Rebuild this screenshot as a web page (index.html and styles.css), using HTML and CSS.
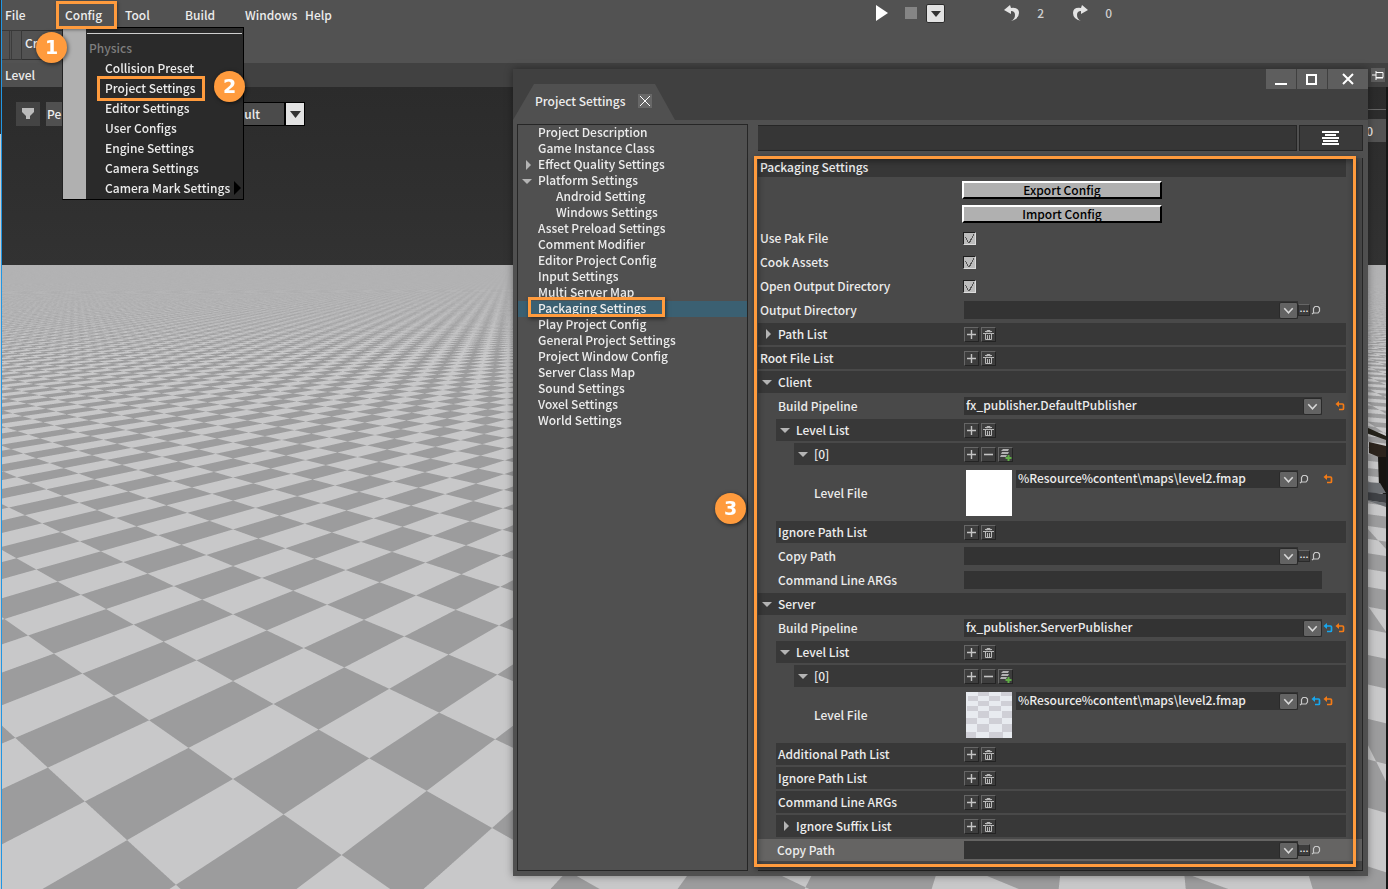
FILE: index.html
```html
<!DOCTYPE html>
<html lang="en">
<head>
    <meta charset="UTF-8">
    <meta name="viewport" content="width=device-width, initial-scale=1.0">
    <title>Project Settings</title>
    <link rel="stylesheet" href="styles.css">
</head>
<body>
    <svg class="sprites" aria-hidden="true">
        <symbol id="plus" viewBox="0 0 13 13"><path d="M6.5 2v9M2 6.5h9" stroke="#c4c4c4" stroke-width="1.4"/></symbol>
        <symbol id="minus" viewBox="0 0 13 13"><path d="M2 6.5h9" stroke="#c4c4c4" stroke-width="1.6"/></symbol>
        <symbol id="trash" viewBox="0 0 13 13"><path d="M1 5.5h11M5 4.5v-2h3v2M3 3.5h7M3.5 6v5.5h6V6M5.5 7v4M7.5 7v4" fill="none" stroke="#b8b8b8"/></symbol>
        <symbol id="stack" viewBox="0 0 13 13"><path d="M4 1h6L9 3H2zM3 4h7L9 6H2zM2 7h6l-1 2H1z" fill="#b0b0b0"/><path d="M9.5 7v6M6.5 10h6" stroke="#5fae45" stroke-width="2"/></symbol>
        <symbol id="chevron" viewBox="0 0 18 16"><path d="M4.5 5.5L9 10.5l4.5-5" fill="none" stroke="#d8d8d8" stroke-width="1.6"/></symbol>
        <symbol id="lens" viewBox="0 0 12 12"><path d="M4 8.5L2 10M3.5 9V4.5L5 2.5h3L9.5 4v3L8 9z" fill="none" stroke="#c8c8c8" stroke-width="1.2"/></symbol>
        <symbol id="revert" viewBox="0 0 12 12"><path d="M3 4h5.5Q9.5 4 9.5 5v3.5Q9.5 9.5 8.5 9.5H5" fill="none" stroke="currentColor" stroke-width="1.7"/><path d="M1.5 4L5 1v6z" fill="currentColor"/></symbol>
    </svg>

    <div class="editor">
        <nav class="menubar">
            <button class="menu">File</button>
            <div class="menu-open">
                <button class="menu">Config</button>
                <div class="dropdown">
                    <div class="dropdown-title">Physics</div>
                    <button class="item">Collision Preset</button>
                    <button class="item marked">Project Settings</button>
                    <button class="item">Editor Settings</button>
                    <button class="item">User Configs</button>
                    <button class="item">Engine Settings</button>
                    <button class="item">Camera Settings</button>
                    <button class="item more">Camera Mark Settings</button>
                </div>
                <span class="badge badge-1">1</span>
                <span class="badge badge-2">2</span>
            </div>
            <button class="menu">Tool</button>
            <button class="menu">Build</button>
            <button class="menu">Windows</button>
            <button class="menu">Help</button>
            <div class="playbar">
                <button aria-label="Play"><svg width="14" height="18"><path d="M1 1l12 8-12 8z" fill="#fff"/></svg></button>
                <button class="stop" aria-label="Stop"></button>
                <button class="play-options" aria-label="Play options"><svg width="17" height="17"><path d="M4 6h10l-5 6z" fill="#333"/></svg></button>
                <button class="undo" aria-label="Undo"><svg width="16" height="18"><path d="M6 1L0 6l7 4V7q4 0 4 4t-4 6q8-2 8-8t-8-5z" fill="#e4e4e4"/></svg></button>
                <span class="count">2</span>
                <button class="redo" aria-label="Redo"><svg width="16" height="18"><path d="M10 1l6 5-7 4V7Q5 7 5 11t4 6Q1 15 1 9t8-5z" fill="#e4e4e4"/></svg></button>
                <span class="count">0</span>
            </div>
        </nav>
        <div class="toolbar">
            <span class="grip"></span>
            <button class="tool">Cr</button>
        </div>
        <div class="tabs">
            <span class="level-tab">Level</span>
            <button class="pin" aria-label="Pin"><svg width="14" height="14"><path d="M1 7h4M5 3v9M5 4.5h7v5H5M5 10h7" fill="none" stroke="#fff"/></svg></button>
        </div>
        <div class="viewport">
            <canvas class="floor"></canvas>
            <div class="view-tools">
                <button class="view-menu" aria-label="View menu"><svg width="24" height="24"><path d="M6 6h12v4l-4 4v3h-4v-3l-4-4z" fill="#bbb"/></svg></button>
                <button class="view-mode">Pe</button>
                <button class="view-preset">ult</button>
                <button class="view-arrow" aria-label="Choose preset"><svg width="18" height="21"><path d="M4 7h11l-5.500 7z" fill="#333"/></svg></button>
            </div>
            <div class="view-side"><span>0</span></div>
            <svg class="robot" width="20" height="90"><path d="M0 8l20 9v4L0 14z" fill="#24221a"/><path d="M3 23l17 4v14L3 34z" fill="#2c241d"/><path d="M12 38h8v42l-7-12z" fill="#161411"/><path d="M0 63l14 1 6 10H0z" fill="#6c6f73"/><path d="M0 73l20 2v9L0 81z" fill="#3f4145"/><path d="M0 81l20 3v4z" fill="#6c6f73"/></svg>
        </div>
    </div>

    <main class="window">
        <header class="titlebar">
            <div class="window-tab">Project Settings
                <button class="close-tab" aria-label="Close tab"><svg width="14" height="14"><path d="M2 2l10 10M12 2L2 12" stroke="#fff"/></svg></button>
            </div>
            <div class="window-buttons">
                <button aria-label="Minimize"><svg width="14" height="14"><path d="M1 12h12" stroke="#fff" stroke-width="2"/></svg></button>
                <button aria-label="Maximize"><svg width="14" height="14"><path d="M2 3h9v9H2z" fill="none" stroke="#fff" stroke-width="2"/></svg></button>
                <button class="wide" aria-label="Close"><svg width="14" height="14"><path d="M2 2l10 10M12 2L2 12" stroke="#fff" stroke-width="2"/></svg></button>
            </div>
        </header>
        <div class="window-body">
            <aside class="tree">
                <ul>
                    <li>Project Description</li>
                    <li>Game Instance Class</li>
                    <li class="closed">Effect Quality Settings</li>
                    <li class="open">Platform Settings</li>
                    <li class="child">Android Setting</li>
                    <li class="child">Windows Settings</li>
                    <li>Asset Preload Settings</li>
                    <li>Comment Modifier</li>
                    <li>Editor Project Config</li>
                    <li>Input Settings</li>
                    <li>Multi Server Map</li>
                    <li class="selected">Packaging Settings</li>
                    <li>Play Project Config</li>
                    <li>General Project Settings</li>
                    <li>Project Window Config</li>
                    <li>Server Class Map</li>
                    <li>Sound Settings</li>
                    <li>Voxel Settings</li>
                    <li>World Settings</li>
                </ul>
            </aside>
            <section class="details">
                <div class="search">
                    <input type="text" aria-label="Search settings">
                    <button aria-label="List options"><svg width="18" height="16"><path d="M0 2h17M3 5h11M0 8h17M1 11h15M0 14h17" stroke="#fff" stroke-width="2"/></svg></button>
                </div>
                <div class="panel">
                    <h2>Packaging Settings</h2>

                    <div class="row"><span class="label"></span><div class="value flush"><button class="action">Export Config</button></div></div>
                    <div class="row"><span class="label"></span><div class="value flush"><button class="action">Import Config</button></div></div>
                    <div class="row"><label class="label" for="pak">Use Pak File</label><div class="value flush"><input type="checkbox" id="pak" checked></div></div>
                    <div class="row"><label class="label" for="cook">Cook Assets</label><div class="value flush"><input type="checkbox" id="cook" checked></div></div>
                    <div class="row"><label class="label" for="open-dir">Open Output Directory</label><div class="value flush"><input type="checkbox" id="open-dir" checked></div></div>
                    <div class="row"><label class="label" for="out-dir">Output Directory</label>
                        <div class="value">
                            <span class="combo"><select id="out-dir"><option></option></select><svg><use href="#chevron"/></svg></span>
                            <button class="slot dots" aria-label="Browse">...</button>
                            <button class="slot" aria-label="Find"><svg><use href="#lens"/></svg></button>
                            <span class="slot"></span><span class="slot"></span>
                        </div>
                    </div>
                    <div class="row bar"><span class="label closed">Path List</span><div class="value"><button class="tiny" aria-label="Add"><svg><use href="#plus"/></svg></button><button class="tiny" aria-label="Clear"><svg><use href="#trash"/></svg></button></div></div>
                    <div class="row bar"><span class="label">Root File List</span><div class="value"><button class="tiny" aria-label="Add"><svg><use href="#plus"/></svg></button><button class="tiny" aria-label="Clear"><svg><use href="#trash"/></svg></button></div></div>

                    <!-- Client -->
                    <div class="row bar"><span class="label open">Client</span></div>
                    <div class="row depth-1"><label class="label" for="client-pipe">Build Pipeline</label>
                        <div class="value">
                            <span class="combo"><select id="client-pipe"><option>fx_publisher.DefaultPublisher</option></select><svg><use href="#chevron"/></svg></span>
                            <span class="slot"></span>
                            <button class="slot orange" aria-label="Reset"><svg><use href="#revert"/></svg></button>
                        </div>
                    </div>
                    <div class="row bar depth-1"><span class="label open">Level List</span><div class="value"><button class="tiny" aria-label="Add"><svg><use href="#plus"/></svg></button><button class="tiny" aria-label="Clear"><svg><use href="#trash"/></svg></button></div></div>
                    <div class="row bar depth-2"><span class="label open">[0]</span><div class="value"><button class="tiny" aria-label="Insert"><svg><use href="#plus"/></svg></button><button class="tiny" aria-label="Remove"><svg><use href="#minus"/></svg></button><button class="tiny" aria-label="Duplicate"><svg><use href="#stack"/></svg></button></div></div>
                    <div class="row tall depth-3"><label class="label" for="client-level">Level File</label>
                        <div class="value">
                            <span class="thumb"></span>
                            <span class="combo"><select id="client-level"><option>%Resource%content\maps\level2.fmap</option></select><svg><use href="#chevron"/></svg></span>
                            <button class="slot" aria-label="Find"><svg><use href="#lens"/></svg></button>
                            <span class="slot"></span>
                            <button class="slot orange" aria-label="Reset"><svg><use href="#revert"/></svg></button>
                            <span class="slot"></span>
                        </div>
                    </div>
                    <div class="row bar depth-1"><span class="label">Ignore Path List</span><div class="value"><button class="tiny" aria-label="Add"><svg><use href="#plus"/></svg></button><button class="tiny" aria-label="Clear"><svg><use href="#trash"/></svg></button></div></div>
                    <div class="row depth-1"><label class="label" for="client-copy">Copy Path</label>
                        <div class="value">
                            <span class="combo"><select id="client-copy"><option></option></select><svg><use href="#chevron"/></svg></span>
                            <button class="slot dots" aria-label="Browse">...</button>
                            <button class="slot" aria-label="Find"><svg><use href="#lens"/></svg></button>
                            <span class="slot"></span><span class="slot"></span>
                        </div>
                    </div>
                    <div class="row depth-1"><label class="label" for="client-args">Command Line ARGs</label>
                        <div class="value"><input type="text" class="field" id="client-args"><span class="slot"></span><span class="slot"></span></div>
                    </div>

                    <!-- Server -->
                    <div class="row bar"><span class="label open">Server</span></div>
                    <div class="row depth-1"><label class="label" for="server-pipe">Build Pipeline</label>
                        <div class="value">
                            <span class="combo"><select id="server-pipe"><option>fx_publisher.ServerPublisher</option></select><svg><use href="#chevron"/></svg></span>
                            <button class="slot blue" aria-label="Revert"><svg><use href="#revert"/></svg></button>
                            <button class="slot orange" aria-label="Reset"><svg><use href="#revert"/></svg></button>
                        </div>
                    </div>
                    <div class="row bar depth-1"><span class="label open">Level List</span><div class="value"><button class="tiny" aria-label="Add"><svg><use href="#plus"/></svg></button><button class="tiny" aria-label="Clear"><svg><use href="#trash"/></svg></button></div></div>
                    <div class="row bar depth-2"><span class="label open">[0]</span><div class="value"><button class="tiny" aria-label="Insert"><svg><use href="#plus"/></svg></button><button class="tiny" aria-label="Remove"><svg><use href="#minus"/></svg></button><button class="tiny" aria-label="Duplicate"><svg><use href="#stack"/></svg></button></div></div>
                    <div class="row tall depth-3"><label class="label" for="server-level">Level File</label>
                        <div class="value">
                            <svg class="thumb" viewBox="0 0 46 46"><path fill="#cfcfd6" d="M12 0h11v4H12zM35 0h11v4H35zM2 4h10v5H2zM23 4h11v5H23zM12 9h11v5H12zM35 9h11v5H35zM1 14h11v5H1zM23 14h12v5H23zM12 19h11v7H12zM36 19h10v7H36zM0 26h11v6H0zM23 26h13v6H23zM11 32h12v8H11zM36 32h10v8H36zM0 40h10v6H0zM23 40h14v6H23z"/></svg>
                            <span class="combo"><select id="server-level"><option>%Resource%content\maps\level2.fmap</option></select><svg><use href="#chevron"/></svg></span>
                            <button class="slot" aria-label="Find"><svg><use href="#lens"/></svg></button>
                            <button class="slot blue" aria-label="Revert"><svg><use href="#revert"/></svg></button>
                            <button class="slot orange" aria-label="Reset"><svg><use href="#revert"/></svg></button>
                            <span class="slot"></span>
                        </div>
                    </div>
                    <div class="row bar depth-1"><span class="label">Additional Path List</span><div class="value"><button class="tiny" aria-label="Add"><svg><use href="#plus"/></svg></button><button class="tiny" aria-label="Clear"><svg><use href="#trash"/></svg></button></div></div>
                    <div class="row bar depth-1"><span class="label">Ignore Path List</span><div class="value"><button class="tiny" aria-label="Add"><svg><use href="#plus"/></svg></button><button class="tiny" aria-label="Clear"><svg><use href="#trash"/></svg></button></div></div>
                    <div class="row bar depth-1"><span class="label">Command Line ARGs</span><div class="value"><button class="tiny" aria-label="Add"><svg><use href="#plus"/></svg></button><button class="tiny" aria-label="Clear"><svg><use href="#trash"/></svg></button></div></div>
                    <div class="row bar depth-1"><span class="label closed">Ignore Suffix List</span><div class="value"><button class="tiny" aria-label="Add"><svg><use href="#plus"/></svg></button><button class="tiny" aria-label="Clear"><svg><use href="#trash"/></svg></button></div></div>
                    <div class="row bar hovered"><label class="label" for="server-copy">Copy Path</label>
                        <div class="value">
                            <span class="combo"><select id="server-copy"><option></option></select><svg><use href="#chevron"/></svg></span>
                            <button class="slot dots" aria-label="Browse">...</button>
                            <button class="slot" aria-label="Find"><svg><use href="#lens"/></svg></button>
                            <span class="slot"></span><span class="slot"></span>
                        </div>
                    </div>
                    <div class="frame"></div>
                    <span class="badge badge-3">3</span>
                </div>
            </section>
        </div>
    </main>
    <script src="floor.js"></script>
</body>
</html>
```

FILE: styles.css
```css
*, *::before, *::after {
    box-sizing: border-box;
}
body {
    margin: 0;
    padding-left: 1px;
    height: 100vh;
    overflow: hidden;
    position: relative;
    font-family: "Noto Sans CJK SC", "Noto Sans", sans-serif;
    font-size: 12px;
    font-weight: 500;
    line-height: 16px;
    color: #ececec;
    background: linear-gradient(#2f2f2f 134px, #c9c9c9 134px);
}
button, input, select {
    font: inherit;
    color: inherit;
    margin: 0;
    padding: 0;
    border: 0;
    border-radius: 0;
    background: none;
}
svg {
    display: block;
}
.sprites {
    display: none;
}

/* editor behind the window */
.editor {
    height: 100%;
    display: flex;
    flex-direction: column;
    border-left: 1px solid #2196e3;
}
.menubar {
    display: flex;
    height: 30px;
    background: #525252;
    position: relative;
}
.menu {
    width: 60px;
    height: 30px;
    padding-left: 3px;
    text-align: left;
}
.menu-open {
    position: relative;
    z-index: 2;
}
.menu-open::before {
    content: "";
    position: absolute;
    left: -6px;
    top: 1px;
    width: 61px;
    height: 28px;
    border: 3px solid #ff9b3d;
    box-shadow: 1px 1px 3px rgba(0, 0, 0, 0.4);
    z-index: 1;
}
.dropdown {
    position: absolute;
    left: 0;
    top: 27px;
    width: 182px;
    height: 173px;
    padding-top: 10px;
    border: 1px solid #000;
    border-left-color: #222;
    background: linear-gradient(to right, #b0b0b0 23px, #2a2a2a 23px);
}
.dropdown::before {
    content: "";
    position: absolute;
    left: 24px;
    right: 1px;
    top: 5px;
    height: 1px;
    background: #cfcfcf;
}
.dropdown-title {
    padding-left: 26px;
    line-height: 20px;
    color: #7d7d7d;
}
.item {
    display: block;
    width: 100%;
    height: 20px;
    padding-left: 42px;
    text-align: left;
    white-space: nowrap;
    position: relative;
}
.marked::after {
    content: "";
    position: absolute;
    left: 34px;
    top: -2px;
    width: 108px;
    height: 25px;
    border: 3px solid #ff9b3d;
}
.more::after {
    content: "";
    position: absolute;
    right: 2px;
    top: 3px;
    border: 7px solid transparent;
    border-left-color: #000;
    border-right: 0;
}
.badge {
    position: absolute;
    z-index: 3;
    width: 31px;
    height: 31px;
    border-radius: 50%;
    background: #ff9b3d;
    box-shadow: 1px 1px 4px rgba(0, 0, 0, 0.6);
    color: #fff;
    font: bold 19px/31px "DejaVu Sans", sans-serif;
    text-align: center;
}
.badge-1 {
    left: -26px;
    top: 32px;
}
.badge-2 {
    left: 152px;
    top: 71px;
}
.badge-3 {
    left: -43px;
    top: 335px;
}
.playbar {
    position: absolute;
    left: 63%;
    top: 0;
    height: 26px;
    display: flex;
    align-items: center;
}
.stop {
    width: 12px;
    height: 12px;
    margin: 0 9px 0 16px;
    background: #858585;
}
.play-options {
    width: 19px;
    height: 19px;
    border: 1px solid #2c2c2c;
    border-radius: 2px;
    background: #e2e2e2;
}
.undo {
    margin-left: 59px;
}
.redo {
    margin-left: 28px;
}
.count {
    width: 24px;
    padding-left: 17px;
    color: #cfcfcf;
}
.toolbar {
    display: flex;
    height: 33px;
    background: #525252;
}
.grip {
    width: 20px;
    height: 30px;
    border: 1px solid #383838;
    border-left: 0;
    background: linear-gradient(to right, transparent 7px, #3c3c3c 7px, #3c3c3c 8px, transparent 8px, transparent 9px, #3c3c3c 9px, #3c3c3c 10px, transparent 10px);
}
.tool {
    width: 90px;
    height: 30px;
    padding: 0 0 4px 3px;
    text-align: left;
    border: 1px solid #303030;
    border-left: 0;
}
.tabs {
    display: flex;
    justify-content: space-between;
    height: 24px;
    background: #414141;
}
.level-tab {
    width: 80px;
    padding-left: 3px;
    line-height: 24px;
    background: #505050;
}
.pin {
    width: 14px;
    height: 14px;
    margin: 5px 3px 0 0;
    background: #5e5e5e;
}
.viewport {
    flex: 1;
    position: relative;
    background: linear-gradient(#2b2b2b, #323232 180px);
    border-right: 2px solid #161616;
}
.floor {
    position: absolute;
    left: 0;
    top: 0;
    width: 100%;
    height: 100%;
}
.view-tools {
    position: relative;
    display: flex;
    padding: 15px 0 0 14px;
    height: 39px;
}
.view-menu {
    width: 24px;
    background: #444;
}
.view-mode {
    width: 60px;
    margin-left: 6px;
    padding-left: 1px;
    text-align: left;
    background: #505050;
}
.view-preset {
    width: 123px;
    margin-left: 56px;
    padding-right: 24px;
    text-align: right;
    border: 1px solid #000;
    background: #4b4b4b;
}
.view-arrow {
    width: 20px;
    border: 1px solid #000;
    background: #e2e2e2;
}
.view-side {
    position: absolute;
    right: 0;
    top: 22px;
    width: 60px;
    padding-top: 9px;
    border-top: 1px solid #666;
    text-align: right;
}
.view-side span {
    display: block;
    padding-right: 13px;
    line-height: 23px;
    background: #535353;
}
.robot {
    position: absolute;
    right: 0;
    top: 332px;
}

/* settings window */
.window {
    position: absolute;
    left: 513px;
    right: 20px;
    top: 69px;
    background: #505050;
    box-shadow: 0 0 8px rgba(0, 0, 0, 0.4);
}
.titlebar {
    display: flex;
    justify-content: space-between;
    height: 51px;
    background: #404040;
}
.window-tab {
    display: flex;
    align-items: center;
    gap: 12px;
    align-self: flex-end;
    width: 162px;
    height: 36px;
    padding: 0 0 2px 22px;
    background: #505050;
    clip-path: polygon(21px 0, 142px 0, 100% 100%, 0 100%);
    white-space: nowrap;
}
.close-tab {
    background: #686868;
}
.window-buttons {
    display: flex;
    gap: 1px;
}
.window-buttons button {
    display: flex;
    align-items: center;
    justify-content: center;
    width: 30px;
    height: 20px;
    background: #5e5e5e;
}
.window-buttons .wide {
    width: 40px;
}
.window-body {
    display: flex;
    gap: 10px;
    padding: 4px 5px 5px 4px;
}
.tree {
    width: 231px;
    border: 1px solid #262626;
}
.tree ul {
    margin: 0;
    padding: 0;
    list-style: none;
}
.tree li {
    position: relative;
    height: 16px;
    padding-left: 20px;
    line-height: 14px;
}
.tree .child {
    padding-left: 38px;
}
.selected {
    background: #3b6072;
}
.selected::after {
    content: "";
    position: absolute;
    z-index: 1;
    left: 10px;
    top: -4px;
    width: 137px;
    height: 20px;
    border: 3px solid #ff9b3d;
    box-shadow: 1px 2px 4px rgba(0, 0, 0, 0.5);
}
.open::before, .closed::before {
    content: "";
    position: absolute;
    border: 5px solid transparent;
}
.open::before {
    left: 4px;
    top: 6px;
    border-top-color: #b4b4b4;
    border-bottom: 0;
}
.closed::before {
    left: 8px;
    top: 3px;
    border-left-color: #b4b4b4;
    border-right: 0;
}
.details {
    flex: 1;
    min-width: 0;
}
.search {
    display: flex;
    gap: 2px;
    height: 26px;
    margin: 1px 0 7px;
}
.search input {
    flex: 1;
    background: #363636;
    border: 1px solid #262626;
    border-left: 0;
}
.search button {
    display: flex;
    align-items: center;
    justify-content: center;
    width: 64px;
    border: 1px solid #262626;
    background: #3a3a3a;
}
.panel {
    position: relative;
    height: 713px;
    padding-right: 16px;
    border: 1px solid #262626;
    border-width: 0 1px 1px 0;
    background: #494949;
}
.panel h2 {
    margin: 0 0 1px;
    padding-left: 2px;
    height: 19px;
    font-size: 12px;
    font-weight: 500;
    line-height: 17px;
    background: #373737;
}
.row {
    display: flex;
    align-items: center;
    height: 24px;
}
.bar {
    border: 1px solid transparent;
    border-width: 1px 0;
    background: #383838;
    background-clip: padding-box;
}
.tall {
    height: 54px;
}
.hovered {
    margin-right: -16px;
    padding-right: 16px;
    background-color: #656463;
}
.label {
    position: relative;
    flex: none;
    width: 204px;
    padding-left: 2px;
    white-space: nowrap;
}
.label.open, .label.closed {
    padding-left: 20px;
}
.depth-1 {
    margin-left: 18px;
}
.depth-1 .label {
    width: 186px;
}
.depth-2 {
    margin-left: 36px;
}
.depth-2 .label {
    width: 168px;
}
.depth-3 {
    margin-left: 54px;
}
.depth-3 .label {
    width: 150px;
}
.hovered .label {
    padding-left: 19px;
}
.value {
    flex: 1;
    display: flex;
    align-items: center;
    padding-left: 2px;
}
.flush {
    padding-left: 0;
}
.action {
    width: 200px;
    height: 18px;
    border: 2px solid #000;
    border-top-color: #fff;
    border-left-color: #fff;
    background: #b0b0b0;
    color: #000;
    line-height: 14px;
}
input[type="checkbox"] {
    appearance: none;
    width: 13px;
    height: 13px;
    margin-left: 1px;
    border: 1px solid #1e1e1e;
    border-right-color: #ddd;
    border-bottom-color: #ddd;
    background: #bcbcbc;
}
input[type="checkbox"]:checked {
    background: linear-gradient(60deg, transparent 44%, #555 44%, #555 58%, transparent 58%) 1px 4px / 4px 6px no-repeat, linear-gradient(118deg, transparent 46%, #555 46%, #555 56%, transparent 56%) 4px 1px / 7px 9px no-repeat, #bcbcbc;
}
.combo {
    position: relative;
    flex: 1;
    display: flex;
    height: 18px;
}
.combo select {
    appearance: none;
    width: 100%;
    padding: 0 20px 2px 2px;
    background: #333;
    line-height: 16px;
}
.combo svg {
    position: absolute;
    right: 0;
    top: 1px;
    width: 19px;
    height: 17px;
    border: 1px solid #2a2a2a;
    border-radius: 2px;
    background: #636363;
    pointer-events: none;
}
.field {
    flex: 1;
    height: 18px;
    background: #333;
}
.slot {
    flex: none;
    width: 12px;
    height: 12px;
}
.slot svg {
    width: 12px;
    height: 12px;
}
.dots {
    border: 1px solid #2a2a2a;
    border-top-color: #666;
    background: #3d3d3d;
    font-size: 10px;
    line-height: 4px;
    padding-bottom: 4px;
}
.orange {
    color: #f47b16;
}
.blue {
    color: #17a7ee;
}
.tiny {
    width: 15px;
    height: 15px;
    margin-right: 2px;
    border: 1px solid #666;
    border-right-color: #242424;
    border-bottom-color: #242424;
    background: #3d3d3d;
}
.tiny svg {
    width: 13px;
    height: 13px;
}
.tall .value {
    align-self: flex-start;
    align-items: flex-start;
    padding: 4px 0 0 4px;
}
.tall .slot {
    margin-top: 3px;
}
.thumb {
    width: 46px;
    height: 46px;
    margin-right: 4px;
    background: #fff;
}
svg.thumb {
    background: #e8ebf0;
}
.frame {
    position: absolute;
    left: -4px;
    right: 6px;
    top: -2px;
    bottom: 3px;
    border: 3px solid #ff9b3d;
    box-shadow: 1px 2px 6px rgba(0, 0, 0, 0.5), inset 1px 2px 6px rgba(0, 0, 0, 0.4);
    pointer-events: none;
}
```

FILE: floor.js
```js
// checkered ground plane, seen in perspective
const canvas = document.querySelector('.floor');
const ctx = canvas.getContext('2d');

const horizon = 176;
const depth = 516;
const originX = 231;
const leftVanish = -506;
const rightVanish = 1125;
const samples = 4;

function isDark(x, y) {
    const q = depth / (y - horizon);
    const b = (x * q - originX - leftVanish * (q - 1)) / (rightVanish - leftVanish);
    const a = q - 1 - b;
    const u = Math.floor(a / -0.0642);
    const v = Math.floor(b / 0.1059);
    return (u + v) % 2 === 0;
}

function drawFloor() {
    const w = canvas.width = canvas.clientWidth;
    const h = canvas.height = canvas.clientHeight;
    const image = ctx.createImageData(w, h);
    for (let y = horizon + 2; y < h; y++) {
        // far tiles blur into one grey
        const contrast = Math.min(1, Math.max(0.05, (y - horizon - 15) / 75));
        for (let x = 0; x < w; x++) {
            let dark = 0;
            for (let i = 0; i < samples; i++) {
                for (let j = 0; j < samples; j++) {
                    if (isDark(x + (i + 0.5) / samples, y + (j + 0.5) / samples)) dark++;
                }
            }
            const share = dark / (samples * samples) - 0.5;
            const grey = 178 - share * 44 * contrast;
            const p = (y * w + x) * 4;
            image.data[p] = grey;
            image.data[p + 1] = grey;
            image.data[p + 2] = grey + 1;
            image.data[p + 3] = 255;
        }
    }
    ctx.putImageData(image, 0, 0);
}

window.addEventListener('resize', drawFloor);
drawFloor();
```
